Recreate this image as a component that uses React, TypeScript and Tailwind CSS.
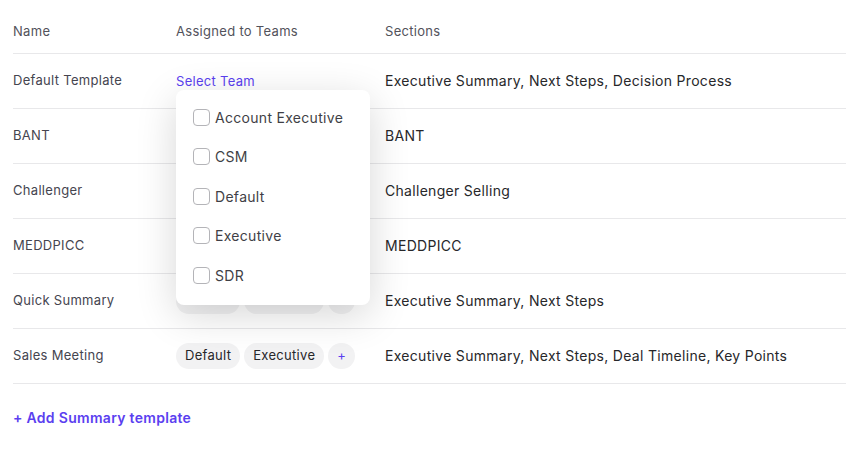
import { useState } from 'react';

const TEAMS = ['Account Executive', 'CSM', 'Default', 'Executive', 'SDR'];

const TEMPLATES = [
  { name: 'Default Template', teams: null, sections: 'Executive Summary, Next Steps, Decision Process' },
  { name: 'BANT', teams: null, sections: 'BANT' },
  { name: 'Challenger', teams: null, sections: 'Challenger Selling' },
  { name: 'MEDDPICC', teams: null, sections: 'MEDDPICC' },
  { name: 'Quick Summary', teams: ['Default', 'Executive'], sections: 'Executive Summary, Next Steps' },
  { name: 'Sales Meeting', teams: ['Default', 'Executive'], sections: 'Executive Summary, Next Steps, Deal Timeline, Key Points' },
];

function TeamChips({ teams }: { teams: string[] }) {
  return (
    <div className="flex items-center gap-1">
      {teams.map((t) => (
        <span
          key={t}
          className="h-[26px] px-[9px] rounded-full bg-[#f2f2f3] text-[13px] text-[#27272a] flex items-center"
        >
          {t}
        </span>
      ))}
      <button className="w-[27px] h-[26px] rounded-full bg-[#f2f2f3] text-[#5b3ff0] text-[13px] flex items-center justify-center">
        +
      </button>
    </div>
  );
}

function TeamDropdown() {
  const [checked, setChecked] = useState<Record<string, boolean>>({});

  return (
    <div className="absolute left-0 top-[19px] z-10 w-[194px] bg-white rounded-lg pt-2 pb-[10px] shadow-[0_10px_40px_rgba(0,0,0,0.16)]">
      {TEAMS.map((t) => (
        <label key={t} className="h-[39.5px] pl-[17px] flex items-center gap-[5px] cursor-pointer">
          <input
            type="checkbox"
            checked={!!checked[t]}
            onChange={() => setChecked({ ...checked, [t]: !checked[t] })}
            className="appearance-none w-[17px] h-[17px] rounded-[4px] border border-[#b4b4b8] bg-white checked:bg-[#5b3ff0] checked:border-[#5b3ff0]"
          />
          <span className="text-[14px] text-[#3f3f46]">{t}</span>
        </label>
      ))}
    </div>
  );
}

export default function App() {
  return (
    <div className="bg-white w-[846px] h-[458px] pl-[13px] font-['Inter',sans-serif] tracking-[0.3px]">
      {/* Header */}
      <div className="flex h-[54px] pt-[11px] items-center border-b border-[#e8e8ea] text-[13px] text-[#52525b]">
        <div className="w-[163px]">Name</div>
        <div className="w-[209px]">Assigned to Teams</div>
        <div className="flex-1">Sections</div>
      </div>

      {/* Rows */}
      {TEMPLATES.map((row, i) => (
        <div key={row.name} className="flex h-[55px] pb-[1px] items-center border-b border-[#e8e8ea]">
          <div className="w-[163px] text-[13px] text-[#45454f]">{row.name}</div>
          <div className="w-[209px] relative">
            {row.teams ? (
              <TeamChips teams={row.teams} />
            ) : (
              <div className="text-[13px] text-[#5b3ff0] leading-5 cursor-pointer">Select Team</div>
            )}
            {i === 0 && <TeamDropdown />}
          </div>
          <div className="flex-1 text-[14px] text-[#27272a]">{row.sections}</div>
        </div>
      ))}

      <button className="mt-6 text-[14px] font-semibold text-[#5b3ff0] leading-5">
        + Add Summary template
      </button>
    </div>
  );
}
